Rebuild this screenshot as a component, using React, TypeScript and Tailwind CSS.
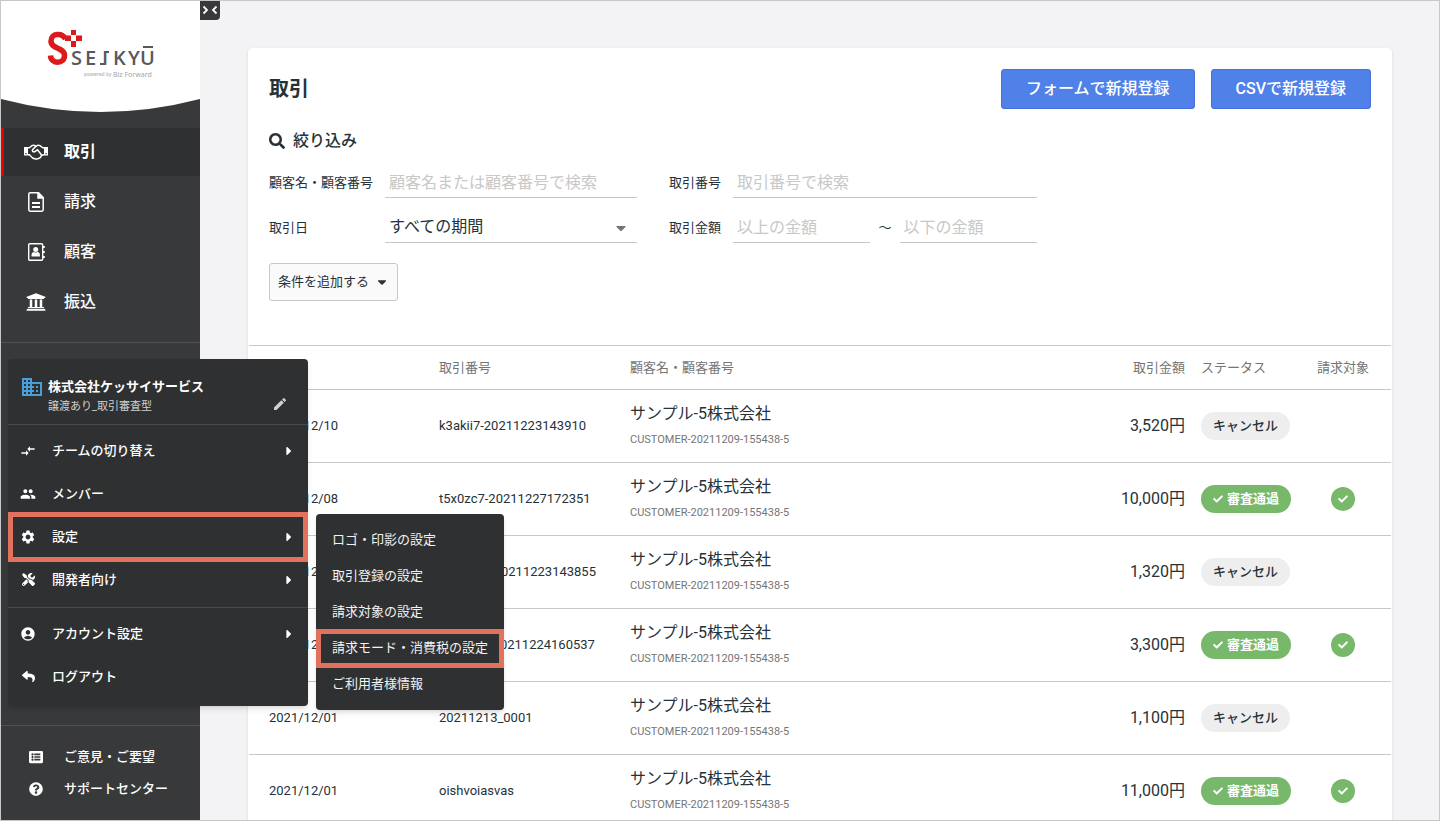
import type { ComponentType } from 'react'
import {
  FaCaretDown,
  FaCaretRight,
  FaCheck,
  FaListAlt,
  FaQuestionCircle,
  FaReply,
  FaSearch,
  FaTools,
  FaUniversity,
} from 'react-icons/fa'
import { MdAccountCircle, MdBusiness, MdCompareArrows, MdEdit, MdPeople, MdSettings } from 'react-icons/md'

type Icon = ComponentType<{ className?: string }>

type MenuItem = {
  label: string
  icon: Icon
  size: string
  children?: string[]
  marked?: boolean
}

function HandshakeIcon({ className }: { className?: string }) {
  return (
    <svg viewBox="0 0 24 16" className={className} fill="none" stroke="currentColor" strokeWidth="1.500">
      <path d="M0 3h4v8.500H0zM20 3h4v8.500h-4zM1.300 9v1.200h1.200V9zM21.500 9v1.200h1.200V9z" fill="currentColor" fillRule="evenodd" stroke="none" />
      <path d="M4 3.800H5.200L8 1.600C9.500 1 10.800 1.400 12 2.300 13.200 1.400 14.500 1 16 1.600L18.800 3.800H20" />
      <path d="M4 10.700H5.500C7 12.500 8.300 14.800 10.800 14.700 13.500 15.700 16.800 14.200 17.600 11.200L20 10.700" />
      <path d="M12 2.300 8.500 5.600C7.800 8 10.600 8.600 12 6.800L13.500 5.800 17.600 11" />
    </svg>
  )
}

function DocumentIcon({ className }: { className?: string }) {
  return (
    <svg viewBox="0 0 16 20" className={className} fill="none" stroke="currentColor" strokeWidth="1.500">
      <path d="M10.500 .8H2.200Q.8 .8 .8 2.200V17.800Q.8 19.200 2.200 19.200H13.800Q15.200 19.200 15.200 17.800V5.500Z" />
      <path d="M10 .8V6H15.200Z" fill="currentColor" />
      <path d="M4 11H12M4 15H12" strokeWidth="1.800" />
    </svg>
  )
}

function AddressBookIcon({ className }: { className?: string }) {
  return (
    <svg viewBox="0 0 17 18" className={className}>
      <rect x="0.700" y="0.700" width="14" height="16.600" rx="1.200" fill="none" stroke="currentColor" strokeWidth="1.400" />
      <circle cx="7.700" cy="6.400" r="2.500" fill="currentColor" />
      <path d="M3.500 13.500V12C3.500 10 4.600 9 6 9Q7.700 10 9.400 9C10.800 9 11.900 10 11.900 12V13.500Z" fill="currentColor" />
      <path d="M15 3h1.800v2H15zM15 8h1.800v2H15zM15 13h1.800v2H15z" fill="currentColor" />
    </svg>
  )
}

const nav: { label: string; icon: Icon; size: string; active?: boolean }[] = [
  { label: '取引', icon: HandshakeIcon, size: 'h-4 w-6', active: true },
  { label: '請求', icon: DocumentIcon, size: 'h-5 w-4' },
  { label: '顧客', icon: AddressBookIcon, size: 'h-[18px] w-[17px]' },
  { label: '振込', icon: FaUniversity, size: 'size-5' },
]

const teamMenu: MenuItem[] = [
  { label: 'チームの切り替え', icon: MdCompareArrows, size: 'size-4', children: [] },
  { label: 'メンバー', icon: MdPeople, size: 'size-4' },
  {
    label: '設定',
    icon: MdSettings,
    size: 'size-4',
    marked: true,
    children: [
      'ロゴ・印影の設定',
      '取引登録の設定',
      '請求対象の設定',
      '請求モード・消費税の設定',
      'ご利用者様情報',
    ],
  },
  { label: '開発者向け', icon: FaTools, size: 'size-[13px]', children: [] },
]

const accountMenu: MenuItem[] = [
  { label: 'アカウント設定', icon: MdAccountCircle, size: 'size-4', children: [] },
  { label: 'ログアウト', icon: FaReply, size: 'size-[13px]' },
]

const transactions = [
  { date: '2021/12/10', number: 'k3akii7-20211223143910', amount: '3,520円', passed: false },
  { date: '2021/12/08', number: 't5x0zc7-20211227172351', amount: '10,000円', passed: true },
  { date: '2021/12/01', number: 'p7o2qa4-20211223143855', amount: '1,320円', passed: false },
  { date: '2021/12/01', number: 'r4k8wd2-20211224160537', amount: '3,300円', passed: true },
  { date: '2021/12/01', number: '20211213_0001', amount: '1,100円', passed: false },
  { date: '2021/12/01', number: 'oishvoiasvas', amount: '11,000円', passed: true },
]

const inputClass =
  'h-full w-full min-w-0 border-b border-[#c8c8c8] bg-transparent px-1 pt-0.5 text-base outline-none placeholder:text-[#c8c8c8]'

const primaryButtonClass =
  'h-10 rounded-[3px] border border-[#4470d8] bg-[#4f81e8] px-6 font-medium text-white'

function Logo() {
  return (
    <svg viewBox="0 0 199 111" className="block w-full" role="img" aria-label="SEIKYŪ powered by Biz Forward">
      <path d="M0 0H199V98Q99.500 124 0 98Z" fill="#fff" />
      <path
        d="M64.500 38C61 31.500 50 32 50 40C50 48.500 63.500 46 63.500 54.500C63.500 63.500 50 63.500 49.500 54.500"
        fill="none"
        stroke="#dc1a1c"
        strokeWidth="5.500"
      />
      <path d="M70 29h5v5h-5zM64 34.500h6v5.500h-6zM75 34.500h6v5.500h-6zM70 40h5v6h-5z" fill="#dc1a1c" />
      <g fill="#58595b" fontFamily="'Open Sans', sans-serif" fontWeight="600">
        <text y="64" fontSize="20" x="70 84 101 112 127 139">SEIKYU</text>
        <rect x="104" y="50" width="4" height="2" />
        <rect x="99" y="62" width="4" height="2" />
        <rect x="142" y="45" width="10" height="2" />
      </g>
      <g fill="#a5a5a5" fontFamily="'Noto Sans', sans-serif">
        <text x="83" y="75" fontSize="5">powered by</text>
        <text x="112" y="76" fontSize="7">Biz Forward</text>
      </g>
    </svg>
  )
}

function MenuRow({ item }: { item: MenuItem }) {
  return (
    <li className="relative">
      <button type="button" className="flex h-[43px] w-full items-center gap-4 px-3 text-[13px] font-medium">
        <span className="flex w-4 justify-center">
          <item.icon className={item.size} />
        </span>
        <span className="flex-1 text-left">{item.label}</span>
        {item.children && <FaCaretRight className="size-3.5" />}
      </button>
      {item.marked && (
        <span className="pointer-events-none absolute inset-x-0 -bottom-1 -top-[3px] border-5 border-[#e2725e]" />
      )}
      {item.children && item.children.length > 0 && (
        <ul className="absolute -top-px left-full ml-2 w-47 rounded bg-[#2f3031] py-2 shadow-md">
          {item.children.map((label) => (
            <li key={label} className="relative">
              <a href="#" className="block px-4 text-[13px] leading-9 text-[#f2f2f2]">
                {label}
              </a>
              {label === '請求モード・消費税の設定' && (
                <span className="pointer-events-none absolute inset-x-0 -bottom-0.5 -top-px border-5 border-[#e2725e]" />
              )}
            </li>
          ))}
        </ul>
      )}
    </li>
  )
}

function TeamMenu() {
  return (
    <div className="absolute left-[7px] top-4 w-75 rounded bg-[#2f3031] shadow-md">
      <div className="flex h-[66px] items-center border-b border-[#48494a] pl-3 pr-5 pt-2">
        <MdBusiness className="mt-2 size-6 shrink-0 self-start text-[#4a9fd8]" />
        <div className="ml-1 flex-1 pt-0.5">
          <p className="text-[13px] leading-5 font-bold">株式会社ケッサイサービス</p>
          <p className="text-[11px] leading-5 text-[#d0d0d0]">譲渡あり_取引審査型</p>
        </div>
        <button type="button" aria-label="チーム名を編集" className="mt-4">
          <MdEdit className="size-4 text-[#d0d0d0]" />
        </button>
      </div>
      <ul className="border-b border-[#48494a] pb-1.5 pt-1">
        {teamMenu.map((item) => (
          <MenuRow key={item.label} item={item} />
        ))}
      </ul>
      <ul className="pb-2 pt-1">
        {accountMenu.map((item) => (
          <MenuRow key={item.label} item={item} />
        ))}
      </ul>
    </div>
  )
}

function Sidebar() {
  return (
    <aside className="relative z-10 flex w-[199px] shrink-0 flex-col bg-[#38393a] text-white">
      <Logo />
      <button
        type="button"
        aria-label="メニューを閉じる"
        className="absolute left-full top-0 flex h-[19px] w-5 items-center justify-center rounded-br bg-[#38393a]"
      >
        <svg viewBox="0 0 20 19" className="h-[19px] w-5" fill="none" stroke="currentColor" strokeWidth="1.800">
          <path d="M3.500 5.500 7 9 3.500 12.500M16.500 5.500 13 9 16.500 12.500" />
        </svg>
      </button>

      <nav className="mt-4 flex flex-col gap-0.5 border-b border-[#505152] pb-4">
        {nav.map((item) => (
          <a
            key={item.label}
            href="#"
            className={
              item.active
                ? 'flex h-12 items-center gap-4 border-l-3 border-[#e60000] bg-[#2f3031] pl-5 font-bold'
                : 'flex h-12 items-center gap-4 border-l-3 border-transparent pl-5 font-medium'
            }
          >
            <span className="flex w-6 justify-center">
              <item.icon className={item.size} />
            </span>
            {item.label}
          </a>
        ))}
      </nav>

      <div className="relative flex-1">
        <TeamMenu />
      </div>

      <nav className="border-t border-[#505152] py-[15px] text-[13px] font-medium">
        <a href="#" className="flex h-8 items-center gap-[21px] pl-7">
          <FaListAlt className="size-3.5" />
          ご意見・ご要望
        </a>
        <a href="#" className="flex h-8 items-center gap-[21px] pl-7">
          <FaQuestionCircle className="size-3.5" />
          サポートセンター
        </a>
      </nav>
    </aside>
  )
}

function Filters() {
  return (
    <form>
      <h2 className="mt-5 flex h-6 items-center gap-2 text-base font-medium">
        <FaSearch className="size-4" />
        絞り込み
      </h2>
      <div className="mt-3 grid max-w-3xl grid-cols-[116px_252fr_96px_304fr] grid-rows-[33px_33px] items-center gap-y-3 text-[13px]">
        <label htmlFor="customer" className="pt-0.5">顧客名・顧客番号</label>
        <input id="customer" className={inputClass} placeholder="顧客名または顧客番号で検索" />
        <label htmlFor="number" className="pl-8 pt-0.5">取引番号</label>
        <input id="number" className={inputClass} placeholder="取引番号で検索" />

        <label htmlFor="period" className="pt-0.5">取引日</label>
        <div className="relative h-full">
          <select id="period" className={`${inputClass} appearance-none`}>
            <option>すべての期間</option>
          </select>
          <FaCaretDown className="pointer-events-none absolute right-2 top-2.5 size-4 text-[#757575]" />
        </div>
        <label htmlFor="amount-min" className="pl-8 pt-0.5">取引金額</label>
        <div className="flex h-full items-center gap-2">
          <input id="amount-min" className={inputClass} placeholder="以上の金額" />
          <span className="pt-0.5">～</span>
          <input aria-label="以下の金額" className={inputClass} placeholder="以下の金額" />
        </div>
      </div>
      <button
        type="button"
        className="mt-5 flex h-[38px] items-center gap-1.5 rounded-[3px] border border-[#c8c8c8] bg-[#fafafa] px-2 text-[13px]"
      >
        条件を追加する
        <FaCaretDown className="size-3.5" />
      </button>
    </form>
  )
}

function TransactionTable() {
  return (
    <table className="mt-11 w-full table-fixed border-separate border-spacing-0">
      <colgroup>
        <col className="w-[174px]" />
        <col className="w-[191px]" />
        <col />
        <col className="w-[150px]" />
        <col className="w-[110px]" />
        <col className="w-24" />
      </colgroup>
      <thead>
        <tr className="h-[45px] text-left text-[13px] text-[#757575] *:border-y *:border-[#c8c8c8] *:font-normal">
          <th className="pl-5">取引日</th>
          <th className="pl-4">取引番号</th>
          <th className="pl-4">顧客名・顧客番号</th>
          <th className="text-right">取引金額</th>
          <th className="pl-4">ステータス</th>
          <th className="text-center">請求対象</th>
        </tr>
      </thead>
      <tbody>
        {transactions.map((row, i) => (
          <tr key={i} className="h-[73px] text-[13px] *:border-b *:border-[#c8c8c8]">
            <td className="pl-5">{row.date}</td>
            <td className="pl-4">{row.number}</td>
            <td className="pl-4 pt-0.5">
              <p className="text-base leading-[26px]">サンプル-5株式会社</p>
              <p className="text-[11px] leading-[26px] text-[#757575]">CUSTOMER-20211209-155438-5</p>
            </td>
            <td className="text-right text-base">{row.amount}</td>
            <td className="pl-4">
              {row.passed ? (
                <span className="inline-flex h-7 items-center gap-1 rounded-full bg-[#78b86b] px-3 align-middle font-bold text-white">
                  <FaCheck className="size-2.5" />
                  審査通過
                </span>
              ) : (
                <span className="inline-flex h-7 items-center rounded-full bg-[#eee] px-3 align-middle font-medium">
                  キャンセル
                </span>
              )}
            </td>
            <td>
              {row.passed && (
                <span className="mx-auto flex size-6 items-center justify-center rounded-full bg-[#78b86b] text-white">
                  <FaCheck className="size-2.5" />
                </span>
              )}
            </td>
          </tr>
        ))}
      </tbody>
    </table>
  )
}

export default function App() {
  return (
    <div className="flex h-screen border border-[#c8c8c8] bg-[#f3f3f5] font-[Roboto,'Noto_Sans_CJK_JP',sans-serif] text-[#263238]">
      <Sidebar />
      <main className="min-w-0 flex-1 overflow-y-auto p-[47px] pl-12 [scrollbar-width:none]">
        <section className="rounded border border-white bg-white shadow-sm">
          <div className="px-5 pt-5">
            <div className="flex h-10 items-center gap-4">
              <h1 className="flex-1 text-xl font-bold">取引</h1>
              <button type="button" className={primaryButtonClass}>フォームで新規登録</button>
              <button type="button" className={primaryButtonClass}>CSVで新規登録</button>
            </div>
            <Filters />
          </div>
          <TransactionTable />
        </section>
      </main>
    </div>
  )
}
